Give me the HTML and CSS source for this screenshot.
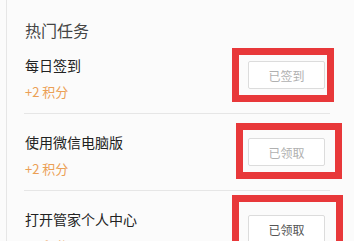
FILE: index.html
```html
<!DOCTYPE html>
<html lang="zh">
<head>
<meta charset="utf-8">
<link rel="stylesheet" href="styles.css">
</head>
<body>
<div class="panel">
  <div class="header">热门任务</div>
  <div class="task">
    <div class="info">
      <div class="title">每日签到</div>
      <div class="points">+2 积分</div>
    </div>
    <div class="btn">已签到</div>
  </div>
  <div class="task">
    <div class="info">
      <div class="title">使用微信电脑版</div>
      <div class="points">+2 积分</div>
    </div>
    <div class="btn">已领取</div>
  </div>
  <div class="task">
    <div class="info">
      <div class="title">打开管家个人中心</div>
      <div class="points">+2 积分</div>
    </div>
    <div class="btn btn-dark">已领取</div>
  </div>
</div>
<div class="mark mark-1"></div>
<div class="mark mark-2"></div>
<div class="mark mark-3"></div>
</body>
</html>
```
FILE: styles.css
```css
html, body {
  margin: 0;
  padding: 0;
  height: 100%;
  overflow: hidden;
}
body {
  background: #fbfbfb;
  font-family: "Noto Sans CJK SC", "Noto Sans", sans-serif;
  position: relative;
}
.panel {
  margin-left: 6px;
  border-left: 1px solid #e6e6e6;
  padding: 0 24px 0 17px;
  height: 100%;
  box-sizing: border-box;
}
.header {
  padding-top: 23px;
  font-size: 16px;
  line-height: 14px;
  color: #444;
  padding-left: 1px;
}
.task {
  display: flex;
  justify-content: space-between;
  align-items: flex-start;
  padding: 18px 5px 11px 1px;
  border-bottom: 1px solid #e6e6e6;
}
.title {
  font-size: 14px;
  line-height: 20px;
  color: #222;
}
.points {
  margin-top: 7px;
  font-size: 13px;
  line-height: 20px;
  color: #eb9f55;
}
.btn {
  margin-top: 6px;
  width: 77px;
  height: 28px;
  box-sizing: border-box;
  border: 1px solid #dcdcdc;
  border-radius: 2px;
  background: #fff;
  color: #b0b0b0;
  font-size: 12px;
  display: flex;
  align-items: center;
  justify-content: center;
}
.btn-dark {
  color: #555;
}
.mark {
  position: absolute;
  border: 7px solid #e8383a;
  box-sizing: border-box;
}
.mark-1 { left: 232px; top: 48px; width: 102px; height: 54px; }
.mark-2 { left: 236px; top: 123px; width: 106px; height: 56px; }
.mark-3 { left: 232px; top: 195px; width: 111px; height: 60px; }
```
